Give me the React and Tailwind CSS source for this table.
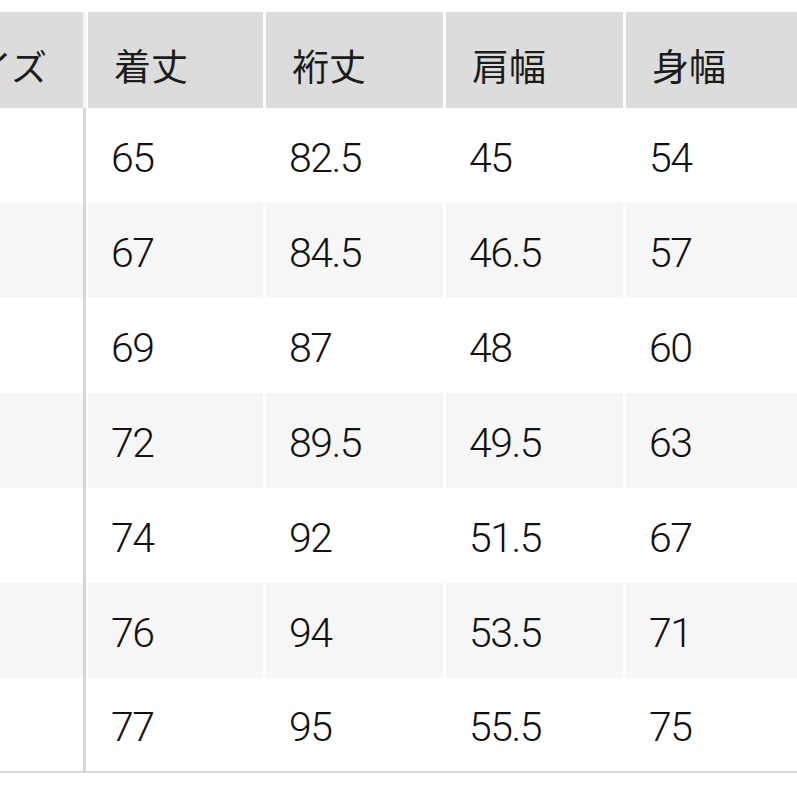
import React from 'react';

const headers = ['着丈', '裄丈', '肩幅', '身幅'];

const rows = [
    ['65', '82.5', '45', '54'],
    ['67', '84.5', '46.5', '57'],
    ['69', '87', '48', '60'],
    ['72', '89.5', '49.5', '63'],
    ['74', '92', '51.5', '67'],
    ['76', '94', '53.5', '71'],
    ['77', '95', '55.5', '75'],
];

const widths = ['w-[175px]', 'w-[177px]', 'w-[177px]', 'flex-1'];

function App() {
    return (
        <div className="w-[797px] h-[797px] overflow-hidden bg-white pt-[12px] text-[#1c1c1c]" style={{ fontFamily: 'Roboto, "Noto Sans CJK JP", sans-serif' }}>
            {/* header */}
            <div className="flex h-[96px]">
                <div className="w-[83px] shrink-0 overflow-hidden bg-[#dcdcdc] flex items-center pt-[10px]">
                    <span className="ml-[-60px] whitespace-nowrap text-[36px] leading-none" style={{ fontFamily: '"Noto Sans CJK JP", sans-serif' }}>サイズ</span>
                </div>
                <div className="w-[3px] shrink-0 bg-[#f4f4f4]"></div>
                <div className="flex flex-1 gap-[3px] ml-[2px]">
                    {headers.map((h, i) => (
                        <div key={h} className={`${widths[i]} shrink-0 bg-[#dcdcdc] flex items-center pl-[26px] pt-[10px]`}>
                            <span className="text-[37px] leading-none" style={{ fontFamily: '"Noto Sans CJK JP", sans-serif' }}>{h}</span>
                        </div>
                    ))}
                </div>
            </div>

            {/* body */}
            {rows.map((r, ri) => {
                const bg = ri % 2 === 1 ? 'bg-[#f6f6f6]' : 'bg-white';
                const last = ri === rows.length - 1;
                return (
                    <div key={ri} className={`flex h-[95px] ${last ? 'border-b-2 border-[#d8d8d8]' : ''}`}>
                        <div className={`w-[83px] shrink-0 ${bg}`}></div>
                        <div className="w-[3px] shrink-0 bg-[#d6d6d6]"></div>
                        <div className="flex flex-1 gap-[3px] ml-[2px]">
                            {r.map((v, i) => (
                                <div key={i} className={`${widths[i]} shrink-0 ${bg} flex items-center pl-[23px] pt-[6px]`}>
                                    <span className="text-[41px] font-light leading-none tracking-[-1.5px] text-[#111]">{v}</span>
                                </div>
                            ))}
                        </div>
                    </div>
                );
            })}
        </div>
    );
}

export default App;
